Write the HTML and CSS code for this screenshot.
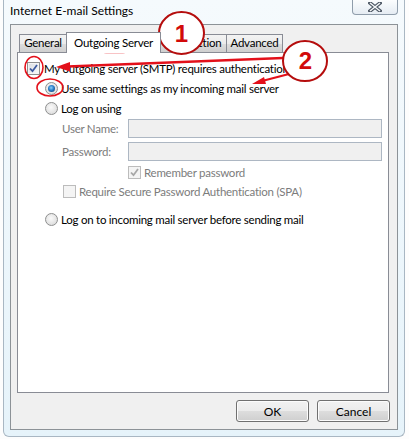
FILE: index.html
```html
<!DOCTYPE html>
<html lang="en">
<head>
  <meta charset="UTF-8" />
  <title>Internet E-mail Settings</title>
  <link rel="stylesheet" href="styles.css">
</head>
<body>
  <div class="desktop">
    <div class="window">
      <div class="titlebar">
        <span class="title">Internet E-mail Settings</span>
        <button class="close" type="button">
          <svg width="14" height="10" viewBox="0 0 14 10">
            <path d="M2 1 L12 9 M12 1 L2 9" stroke="#4b5663" stroke-width="3.6" stroke-linecap="square"/>
            <path d="M2 1 L12 9 M12 1 L2 9" stroke="#f4f6f8" stroke-width="1.6"/>
          </svg>
        </button>
      </div>

      <div class="client">
        <div class="tabs">
          <div class="tab tab-general">General</div>
          <div class="tab tab-active tab-outgoing">Outgoing Server</div>
          <div class="tab tab-connection">Connection</div>
          <div class="tab tab-advanced">Advanced</div>
        </div>

        <div class="panel">
          <div class="row row-auth">
            <span class="check">
              <svg width="11" height="11" viewBox="0 0 11 11"><path d="M2 5.5 L4.5 8.2 L9 2" fill="none" stroke="#3c5aa0" stroke-width="1.8"/></svg>
            </span>
            My outgoing server (SMTP) requires authentication
          </div>
          <div class="row row-same">
            <span class="radio radio-on"></span>
            Use same settings as my incoming mail server
          </div>
          <div class="row row-logon">
            <span class="radio"></span>
            Log on using
          </div>
          <div class="row row-field row-user">
            <span class="field-label">User Name:</span>
            <input class="field" type="text" disabled>
          </div>
          <div class="row row-field row-pass">
            <span class="field-label">Password:</span>
            <input class="field" type="password" disabled>
          </div>
          <div class="row row-remember disabled">
            <span class="check check-off">
              <svg width="11" height="11" viewBox="0 0 11 11"><path d="M2 5.5 L4.5 8.2 L9 2" fill="none" stroke="#a7a7a7" stroke-width="1.8"/></svg>
            </span>
            Remember password
          </div>
          <div class="row row-spa disabled">
            <span class="check check-off"></span>
            Require Secure Password Authentication (SPA)
          </div>
          <div class="row row-before">
            <span class="radio"></span>
            Log on to incoming mail server before sending mail
          </div>
        </div>

        <div class="actions">
          <button class="btn" type="button">OK</button>
          <button class="btn" type="button">Cancel</button>
        </div>
      </div>
    </div>

    <!-- hand drawn notes on top of the dialog -->
    <svg class="marks" width="409" height="439" viewBox="0 0 409 439">
      <ellipse cx="114.5" cy="43" rx="42.5" ry="9.5" fill="none" stroke="#e3101a" stroke-width="1.6"/>
      <path d="M283 58 L68 66.5" fill="none" stroke="#e3101a" stroke-width="2.4"/>
      <polygon points="56,67 70,62 70,71.5" fill="#e3101a"/>
      <path d="M289 74 L264 80.5" fill="none" stroke="#e3101a" stroke-width="2.2"/>
      <polygon points="252,84 264,77 266,84" fill="#e3101a"/>
      <ellipse cx="181.5" cy="33" rx="22.5" ry="21" fill="#fff" stroke="#b50d0d" stroke-width="2"/>
      <text x="181.5" y="42" class="mark-num">1</text>
      <ellipse cx="305" cy="61" rx="22" ry="20" fill="#fff" stroke="#b50d0d" stroke-width="2"/>
      <text x="305.5" y="69" class="mark-num">2</text>
      <ellipse cx="34" cy="67.5" rx="9" ry="11" fill="none" stroke="#e3101a" stroke-width="1.6"/>
      <ellipse cx="50" cy="87.5" rx="13" ry="8.5" fill="none" stroke="#e3101a" stroke-width="1.6"/>
    </svg>
  </div>
</body>
</html>
```

FILE: styles.css
```css
body {
  margin: 0;
  font-family: 'Lato', 'Liberation Sans', sans-serif;
  font-size: 11.5px;
  letter-spacing: -0.25px;
  color: #000;
  background: #fff;
}

.desktop {
  position: relative;
  width: 409px;
  height: 439px;
  overflow: hidden;
  background: #fdfdfd;
}

.window {
  margin-left: 3px;
  width: 402px;
  height: 437px;
  box-sizing: border-box;
  padding: 0 6px 6px;
  border: 1px solid #a9b7c3;
  border-top: none;
  border-radius: 0 0 6px 6px;
  background: linear-gradient(to bottom, #f5fafd, #e6f3fa);
}

/* title bar */
.titlebar {
  display: flex;
  justify-content: space-between;
  align-items: flex-start;
  height: 24px;
}

.title {
  padding-top: 3px;
  font-size: 12px;
  letter-spacing: 0;
  line-height: 15px;
}

.close {
  width: 46px;
  height: 15px;
  padding: 0;
  display: flex;
  align-items: center;
  justify-content: center;
  border: 1px solid #8f9dab;
  border-top: none;
  border-radius: 0 0 4px 4px;
  background: linear-gradient(to bottom, #fbfdfe, #e5ecf3);
}

/* dialog body */
.client {
  height: 406px;
  box-sizing: border-box;
  border: 1px solid #8c9297;
  background: #f0f0f0;
  padding-top: 7px;
}

.tabs {
  display: flex;
  align-items: flex-end;
  height: 20px;
  margin-left: 8px;
}

.tab {
  height: 18px;
  box-sizing: border-box;
  border: 1px solid #898c95;
  border-bottom: none;
  border-right: none;
  background: linear-gradient(to bottom, #f3f3f3 0%, #ebebeb 50%, #dddddd 51%, #cfcfcf 100%);
  text-align: center;
  line-height: 16px;
}

.tab-general { width: 47px; }
.tab-connection { width: 65px; }
.tab-advanced { width: 57px; border-right: 1px solid #898c95; }

.tab-active {
  position: relative;
  z-index: 1;
  height: 21px;
  margin-bottom: -1px;
  width: 95px;
  background: #fff;
  border-right: 1px solid #898c95;
  line-height: 19px;
}

.tab-active + .tab { border-left: none; }

.panel {
  height: 341px;
  box-sizing: border-box;
  margin: 0 8px 0 6px;
  border: 1px solid #898c95;
  background: #fff;
  padding-top: 5px;
}

.row {
  display: flex;
  align-items: center;
  height: 20px;
  white-space: nowrap;
}

.row-auth { padding-left: 9px; }
.row-same, .row-logon { padding-left: 27px; }
.row-field { height: 21px; padding-left: 44px; }
.row-pass { margin-top: 2px; }
.row-remember { height: 21px; padding-left: 110px; }
.row-spa { padding-left: 45px; margin-top: -2px; }
.row-before { padding-left: 27px; margin-top: 8px; }

.disabled, .field-label { color: #7c7c7c; }

.field-label { width: 66px; }

.field {
  width: 254px;
  height: 19px;
  box-sizing: border-box;
  margin: 0;
  border: 1px solid #adb7c3;
  background: #f0f0f0;
}

/* check boxes and radio buttons */
.check {
  width: 13px;
  height: 13px;
  box-sizing: border-box;
  margin-right: 4px;
  display: flex;
  align-items: center;
  justify-content: center;
  border: 1px solid #8e8f8f;
  background: linear-gradient(135deg, #dadde2, #fafafa);
  box-shadow: inset 0 0 0 1px #f4f4f4;
}

.check-off {
  margin-right: 3px;
  border-color: #bcbcbc;
  background: #f4f4f4;
}

.radio {
  width: 13px;
  height: 13px;
  box-sizing: border-box;
  margin-right: 3px;
  display: flex;
  align-items: center;
  justify-content: center;
  border: 1px solid #8e8f8f;
  border-radius: 50%;
  background: radial-gradient(circle at 45% 40%, #fafafa, #e0e0e0 70%, #cfcfcf);
}

.radio-on::after {
  content: "";
  width: 7px;
  height: 7px;
  border-radius: 50%;
  background: radial-gradient(circle at 45% 40%, #8fd3f7, #2a7fcb 45%, #0f3a6b 90%);
}

/* buttons */
.actions {
  display: flex;
  justify-content: flex-end;
  gap: 8px;
  margin-top: 7px;
  padding-right: 7px;
}

.btn {
  width: 73px;
  height: 22px;
  padding: 0;
  font-family: inherit;
  font-size: 12px;
  letter-spacing: 0;
  color: #000;
  border: 1px solid #707070;
  border-radius: 3px;
  background: linear-gradient(to bottom, #f2f2f2 0%, #ebebeb 50%, #dddddd 51%, #cfcfcf 100%);
  box-shadow: inset 0 0 0 1px #fcfcfc;
}

.marks {
  position: absolute;
  left: 0;
  top: 0;
  pointer-events: none;
}

.mark-num {
  font-family: 'Liberation Sans', sans-serif;
  font-weight: bold;
  font-size: 24px;
  letter-spacing: 0;
  fill: #d20a0a;
  text-anchor: middle;
}
```
